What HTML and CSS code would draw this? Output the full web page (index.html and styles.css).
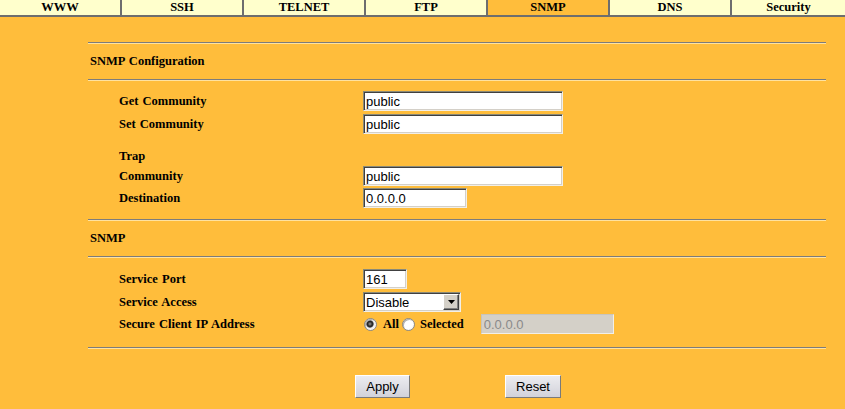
FILE: index.html
```html
<!DOCTYPE html>
<html>
  <head>
    <title>SNMP Settings</title>
    <link rel="stylesheet" href="styles.css">
  </head>
  <body>
    <div class="tabs">
      <div class="tab">WWW</div>
      <div class="tab">SSH</div>
      <div class="tab">TELNET</div>
      <div class="tab">FTP</div>
      <div class="tab active">SNMP</div>
      <div class="tab">DNS</div>
      <div class="tab">Security</div>
    </div>
    <form class="panel">
      <hr>
      <div class="section-title">SNMP Configuration</div>
      <hr>
      <div class="fields">
        <div class="row">
          <label>Get Community</label>
          <input type="text" class="wide" value="public">
        </div>
        <div class="row">
          <label>Set Community</label>
          <input type="text" class="wide" value="public">
        </div>
        <div class="row trap">
          <label>Trap</label>
        </div>
        <div class="row tight">
          <label>Community</label>
          <input type="text" class="wide" value="public">
        </div>
        <div class="row">
          <label>Destination</label>
          <input type="text" class="ip" value="0.0.0.0">
        </div>
      </div>
      <hr class="spaced">
      <div class="section-title">SNMP</div>
      <hr>
      <div class="fields">
        <div class="row tight">
          <label>Service Port</label>
          <input type="text" class="port" value="161">
        </div>
        <div class="row">
          <label>Service Access</label>
          <span class="select-box">
            <select>
              <option>Disable</option>
              <option>Enable</option>
            </select>
            <span class="select-arrow">
              <svg width="7" height="4" viewBox="0 0 7 4"><path d="M0 0h7L3.5 4z" fill="#000"/></svg>
            </span>
          </span>
        </div>
        <div class="row">
          <label>Secure Client IP Address</label>
          <div class="radios">
            <input type="radio" name="client" checked>
            <span class="opt">All</span>
            <input type="radio" name="client">
            <span class="opt">Selected</span>
            <input type="text" class="client-ip" value="0.0.0.0" disabled>
          </div>
        </div>
      </div>
      <hr class="end">
      <div class="buttons">
        <button type="button" class="apply">Apply</button>
        <button type="button" class="reset">Reset</button>
      </div>
    </form>
  </body>
</html>
```

FILE: styles.css
```css
body {
  margin: 0;
  background-color: #ffbd3b;
  font-family: "Liberation Serif", "Times New Roman", serif;
  font-size: 12.5px;
  font-weight: bold;
  word-spacing: 1px;
  color: #000;
}
.tabs {
  display: grid;
  grid-template-columns: repeat(6, 122px) 1fr;
  height: 15px;
  background-color: #ffffcc;
  border-bottom: 2px solid #6e6e6e;
}
.tab {
  line-height: 15px;
  text-align: center;
  border-right: 2px solid #6e6e6e;
}
.tab:last-child {
  border-right: none;
}
.tab.active {
  background-color: #ffbd3b;
}
.panel {
  margin: 25px 0 0 88px;
  width: 738px;
}
hr {
  margin: 0;
  height: 0;
  border: none;
  border-top: 1px solid #7c7c7c;
  border-bottom: 1px solid #ffe2a0;
}
hr.spaced {
  margin-top: 11px;
}
hr.end {
  margin-top: 13px;
}
.section-title {
  height: 35px;
  line-height: 35px;
  padding-left: 2px;
}
.fields {
  padding-top: 10px;
}
.fields + hr + .section-title + hr + .fields {
  padding-top: 11px;
}
.row {
  display: grid;
  grid-template-columns: 275px auto;
  align-items: center;
  height: 20px;
  margin-top: 2px;
}
.row:first-child {
  margin-top: 0;
}
.row:nth-child(2) {
  margin-top: 3px;
}
.row.trap {
  margin-top: 12px;
}
.row.tight {
  margin-top: 0;
}
.row label {
  padding-left: 31px;
}
input[type="text"] {
  box-sizing: border-box;
  height: 20px;
  margin: 0;
  padding: 0 2px;
  font-family: "Liberation Sans", Arial, sans-serif;
  font-size: 13px;
  word-spacing: 0;
  color: #000;
  background-color: #fff;
  border: 1px solid;
  border-color: #8a8a78 #f2efe8 #f2efe8 #8a8a78;
  box-shadow: inset 1px 1px #404040, inset -1px -1px #d4d0c8;
  outline: none;
}
.wide {
  width: 200px;
}
.ip {
  width: 104px;
}
.port {
  width: 44px;
}
.select-box {
  position: relative;
  display: inline-block;
  width: 98px;
  height: 20px;
}
.select-box select {
  appearance: none;
  -webkit-appearance: none;
  box-sizing: border-box;
  width: 98px;
  height: 20px;
  margin: 0;
  padding: 0 2px;
  font-family: "Liberation Sans", Arial, sans-serif;
  font-size: 13px;
  color: #000;
  background-color: #fff;
  border: 1px solid;
  border-color: #8a8a78 #f2efe8 #f2efe8 #8a8a78;
  box-shadow: inset 1px 1px #404040, inset -1px -1px #d4d0c8;
  border-radius: 0;
  outline: none;
}
/* classic drop-down button drawn over the right end of the select */
.select-arrow {
  position: absolute;
  top: 2px;
  right: 2px;
  width: 16px;
  height: 16px;
  box-sizing: border-box;
  display: flex;
  align-items: center;
  justify-content: center;
  background-color: #d4d0c8;
  border: 1px solid;
  border-color: #fff #404040 #404040 #fff;
  box-shadow: inset -1px -1px #808080;
  pointer-events: none;
}
.radios {
  display: flex;
  align-items: center;
}
input[type="radio"] {
  appearance: none;
  -webkit-appearance: none;
  box-sizing: border-box;
  width: 13px;
  height: 13px;
  margin: 0 0 0 1px;
  border-radius: 50%;
  border: 1px solid #8a8a8a;
  background: radial-gradient(circle at 40% 40%, #fff 55%, #e0e0e0 100%);
  box-shadow: inset 1px 1px #b0b0b0;
}
input[type="radio"]:checked {
  background: radial-gradient(circle at 45% 45%, #9a9a9a 0, #222 28%, #3a3a3a 38%, #eee 48%, #fff 100%);
}
.opt {
  margin: 0 2px 0 6px;
}
.opt + input[type="radio"] {
  margin-left: 1px;
}
.radios .opt:nth-of-type(2) {
  margin-left: 5px;
  margin-right: 17px;
}
.client-ip {
  width: 133px;
}
input.client-ip:disabled {
  background-color: #d4d0c8;
  color: #8a8a8a;
  border-color: #c8c4bc #f2efe8 #f2efe8 #c8c4bc;
  box-shadow: none;
}
.buttons {
  display: flex;
  margin-top: 26px;
  padding-left: 267px;
  gap: 95px;
}
.buttons button {
  box-sizing: border-box;
  height: 23px;
  margin: 0;
  padding: 0;
  font-family: "Liberation Sans", Arial, sans-serif;
  font-size: 13px;
  color: #000;
  background: linear-gradient(#ececf0, #d2d2da);
  border: 1px solid;
  border-color: #fff #7a7a7a #7a7a7a #fff;
}
.apply {
  width: 55px;
}
.reset {
  width: 56px;
}
```
